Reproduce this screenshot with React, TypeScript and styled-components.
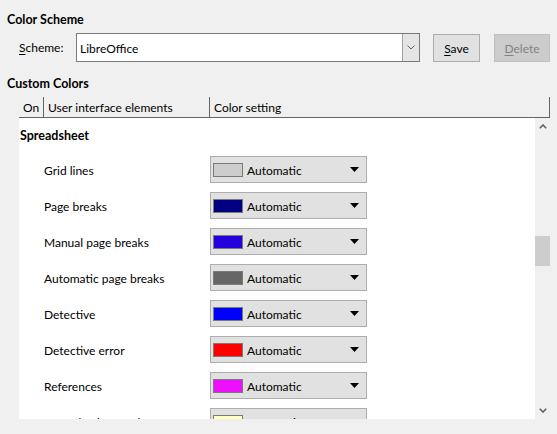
import React from "react";
import styled, { createGlobalStyle } from "styled-components";

const Global = createGlobalStyle`
  html, body { margin: 0; padding: 0; background: #f0f0f0; }
  body { font-family: Lato, "Noto Sans", sans-serif; font-size: 12px; color: #000; }
  * { box-sizing: border-box; }
`;

const Page = styled.div`
  width: 557px;
  height: 434px;
  overflow: hidden;
  background: #f0f0f0;
  display: flex;
  flex-direction: column;
  padding: 12px 7px 0 7px;
`;

const SectionTitle = styled.div<{ $mt?: number }>`
  font-weight: 700;
  font-size: 12.5px;
  line-height: 16px;
  height: 16px;
  margin-top: ${(p) => p.$mt ?? 0}px;
`;

const SchemeRow = styled.div`
  display: flex;
  align-items: center;
  margin-top: 5px;
  padding-left: 12px;
  height: 29px;
`;

const Label = styled.span`
  width: 57px;
  line-height: 16px;
`;

const Combo = styled.div`
  width: 344px;
  height: 29px;
  background: #fff;
  border: 1px solid #7a7a7a;
  display: flex;
  align-items: stretch;
`;

const ComboText = styled.div`
  flex: 1;
  display: flex;
  align-items: center;
  padding-left: 3px;
  padding-top: 1px;
`;

const ComboButton = styled.div`
  width: 17px;
  background: #e5e5e5;
  border-left: 1px solid #a0a0a0;
  display: flex;
  align-items: center;
  justify-content: center;
`;

const Button = styled.div<{ $w: number; $disabled?: boolean }>`
  width: ${(p) => p.$w}px;
  height: 28px;
  margin-left: ${(p) => (p.$disabled ? 14 : 13)}px;
  background: ${(p) => (p.$disabled ? "#cccccc" : "#e1e1e1")};
  border: 1px solid ${(p) => (p.$disabled ? "#bfbfbf" : "#adadad")};
  color: ${(p) => (p.$disabled ? "#838383" : "#000")};
  display: flex;
  align-items: center;
  justify-content: center;
  padding-top: 1px;
`;

const U = styled.span`
  text-decoration: underline;
  text-underline-offset: 2px;
`;

const Table = styled.div`
  margin-left: 12px;
  width: 531px;
  margin-top: 5px;
  display: flex;
  flex-direction: column;
`;

const Header = styled.div`
  height: 21px;
  display: grid;
  grid-template-columns: 24px 166px 1fr;
  border-bottom: 1px solid #646464;
  border-right: 1px solid #646464;
`;

const HeadCell = styled.div<{ $sep?: boolean }>`
  display: flex;
  align-items: center;
  padding-left: 4px;
  padding-top: 2px;
  border-left: ${(p) => (p.$sep ? "1px solid #646464" : "none")};
  line-height: 16px;
`;

const Body = styled.div`
  height: 301px;
  display: flex;
  background: #fff;
`;

const List = styled.div`
  flex: 1;
  overflow: hidden;
  display: flex;
  flex-direction: column;
`;

const Group = styled.div`
  height: 34px;
  flex: none;
  display: flex;
  align-items: center;
  padding-left: 1px;
  padding-top: 1px;
  font-weight: 700;
  font-size: 12.5px;
`;

const Row = styled.div`
  height: 36px;
  flex: none;
  display: flex;
  align-items: flex-start;
  padding-top: 4px;
`;

const RowLabel = styled.div`
  width: 191px;
  height: 27px;
  padding-left: 25px;
  padding-top: 1px;
  display: flex;
  align-items: center;
`;

const ColorBox = styled.div`
  width: 157px;
  height: 27px;
  background: #e1e1e1;
  border: 1px solid #adadad;
  display: flex;
  align-items: center;
  padding-left: 2px;
`;

const Swatch = styled.div<{ $c: string }>`
  width: 30px;
  height: 14px;
  background: ${(p) => p.$c};
  border: 1px solid #7a7a7a;
  margin-right: 4px;
`;

const BoxText = styled.span`
  flex: 1;
  padding-top: 1px;
`;

const Arrow = styled.svg`
  margin-right: 7px;
`;

const Scrollbar = styled.div`
  width: 15px;
  flex: none;
  background: #f0f0f0;
  display: flex;
  flex-direction: column;
  align-items: center;
`;

const ScrollBtn = styled.div`
  height: 17px;
  width: 15px;
  display: flex;
  align-items: center;
  justify-content: center;
  flex: none;
`;

const Track = styled.div`
  flex: 1;
  width: 15px;
  display: flex;
  flex-direction: column;
`;

const Thumb = styled.div`
  width: 15px;
  height: 30px;
  background: #cdcdcd;
  margin-top: 101px;
`;

const rows: [string, string][] = [
  ["Grid lines", "#cccccc"],
  ["Page breaks", "#000080"],
  ["Manual page breaks", "#2300dc"],
  ["Automatic page breaks", "#666666"],
  ["Detective", "#0000ff"],
  ["Detective error", "#ff0000"],
  ["References", "#ef0fff"],
  ["Notes background", "#ffffc0"],
];

export default function App() {
  return (
    <Page>
      <Global />
      <SectionTitle>Color Scheme</SectionTitle>
      <SchemeRow>
        <Label>
          <U>S</U>cheme:
        </Label>
        <Combo>
          <ComboText>LibreOffice</ComboText>
          <ComboButton>
            <svg width="8" height="5" viewBox="0 0 8 5">
              <path d="M0.5 0.5 L4 4 L7.5 0.5" fill="none" stroke="#606060" strokeWidth="1" />
            </svg>
          </ComboButton>
        </Combo>
        <Button $w={47}>
          <span>
            <U>S</U>ave
          </span>
        </Button>
        <Button $w={56} $disabled>
          <span>
            <U>D</U>elete
          </span>
        </Button>
      </SchemeRow>
      <SectionTitle $mt={14}>Custom Colors</SectionTitle>
      <Table>
        <Header>
          <HeadCell>On</HeadCell>
          <HeadCell $sep>User interface elements</HeadCell>
          <HeadCell $sep>Color setting</HeadCell>
        </Header>
        <Body>
          <List>
            <Group>Spreadsheet</Group>
            {rows.map(([name, c]) => (
              <Row key={name}>
                <RowLabel>{name}</RowLabel>
                <ColorBox>
                  <Swatch $c={c} />
                  <BoxText>Automatic</BoxText>
                  <Arrow width="9" height="5" viewBox="0 0 9 5">
                    <path d="M0 0 H9 L4.5 5 Z" fill="#000" />
                  </Arrow>
                </ColorBox>
              </Row>
            ))}
          </List>
          <Scrollbar>
            <ScrollBtn>
              <svg width="8" height="5" viewBox="0 0 8 5">
                <path d="M0.8 4.2 L4 1 L7.2 4.2" fill="none" stroke="#606060" strokeWidth="1.6" />
              </svg>
            </ScrollBtn>
            <Track>
              <Thumb />
            </Track>
            <ScrollBtn>
              <svg width="8" height="5" viewBox="0 0 8 5">
                <path d="M0.8 0.8 L4 4 L7.2 0.8" fill="none" stroke="#606060" strokeWidth="1.6" />
              </svg>
            </ScrollBtn>
          </Scrollbar>
        </Body>
      </Table>
    </Page>
  );
}
